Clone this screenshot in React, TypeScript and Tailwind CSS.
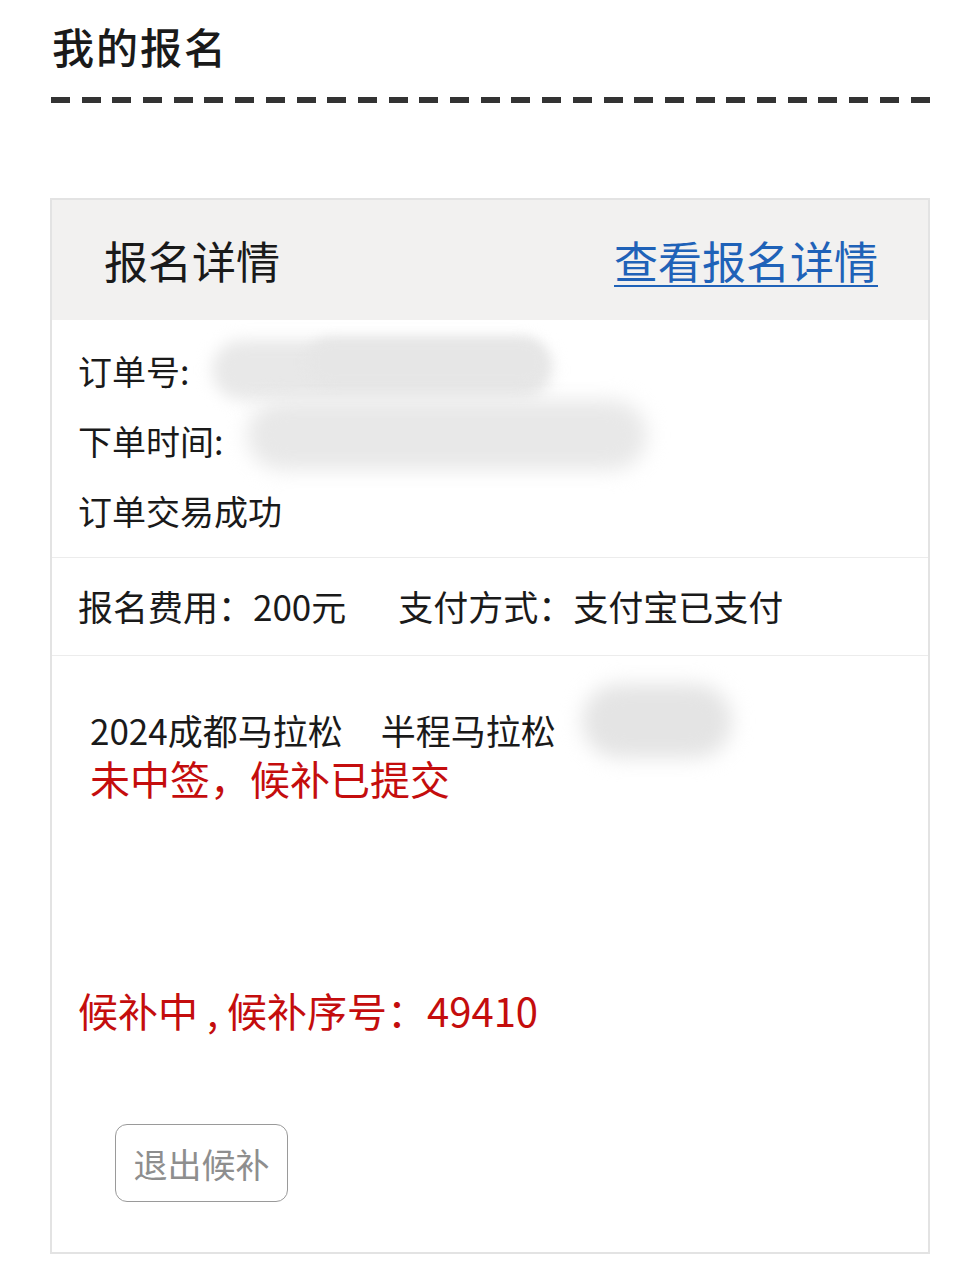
export default function App() {
  const font = { fontFamily: '"Noto Sans CJK SC", "Noto Sans", sans-serif' };

  return (
    <div className="w-[980px] h-[1280px] bg-white text-[#1a1a1a]" style={font}>
      {/* 页面标题 */}
      <div className="px-[52px] pt-[20px]">
        <h1 className="text-[42px] leading-[52px] font-medium tracking-[2px]">我的报名</h1>
      </div>
      <div className="ml-[51px] mt-[25px] w-[880px] h-[6px] bg-[repeating-linear-gradient(90deg,#333_0_19px,transparent_19px_30.7px)]" />

      {/* 报名卡片 */}
      <div className="mx-[50px] mt-[95px] w-[880px] h-[1056px] border-2 border-[#e3e3e3] flex flex-col">
        <div className="h-[120px] bg-[#f2f1f0] flex items-center justify-between pl-[52px] pr-[50px]">
          <span className="text-[44px] leading-none">报名详情</span>
          <a className="text-[44px] leading-none text-[#1f62b8] underline underline-offset-[6px] decoration-2">
            查看报名详情
          </a>
        </div>

        {/* 订单信息 */}
        <div className="relative pl-[26px] pt-[15px] pb-[12px] border-b border-[#ececec] text-[34px]">
          <div className="h-[70px] flex items-center">订单号:</div>
          <div className="h-[70px] flex items-center">下单时间:</div>
          <div className="h-[70px] flex items-center">订单交易成功</div>
          {/* 打码 */}
          <div className="absolute left-[160px] top-[20px] w-[340px] h-[60px] rounded-full bg-[#e8e8e8] blur-[8px]" />
          <div className="absolute left-[255px] top-[18px] w-[240px] h-[48px] rounded-full bg-[#e6e6e6] blur-[6px]" />
          <div className="absolute left-[195px] top-[80px] w-[400px] h-[70px] rounded-full bg-[#e8e8e8] blur-[10px]" />
        </div>

        {/* 费用 */}
        <div className="h-[98px] flex items-center pl-[26px] border-b border-[#ececec] text-[35px]">
          <span>报名费用：200元</span>
          <span className="ml-[52px]">支付方式：支付宝已支付</span>
        </div>

        {/* 项目状态 */}
        <div className="relative flex-1 flex flex-col pl-[38px] pt-[50px]">
          <div className="text-[35px] leading-[48px]">
            2024成都马拉松<span className="ml-[38px]">半程马拉松</span>
          </div>
          <div className="text-[40px] leading-[48px] text-[#c40d0d]">未中签，候补已提交</div>
          <div className="absolute left-[530px] top-[28px] w-[150px] h-[74px] rounded-full bg-[#e4e4e4] blur-[10px]" />

          <div className="mt-[184px] -ml-[12px] text-[40px] leading-[48px] text-[#c40d0d]">
            候补中 , 候补序号：49410
          </div>

          <button className="mt-[90px] ml-[25px] w-[173px] h-[78px] border border-[#9a9a9a] rounded-[12px] text-[34px] text-[#8e8e8e] flex items-center justify-center">
            退出候补
          </button>
        </div>
      </div>
    </div>
  );
}
